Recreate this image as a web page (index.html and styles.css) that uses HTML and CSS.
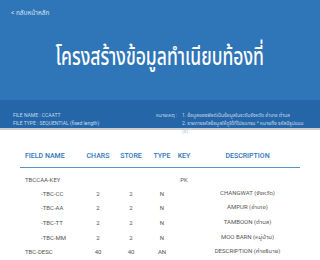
FILE: index.html
```html
<!DOCTYPE html>
<html lang="th">
<head>
<meta charset="utf-8">
<title>โครงสร้างข้อมูลทำเนียบท้องที่</title>
<link rel="stylesheet" href="styles.css">
</head>
<body>
<header class="hero">
  <a class="back" href="#">&lt; กลับหน้าหลัก</a>
  <div class="title-wrap"><h1 class="title">โครงสร้างข้อมูลทำเนียบท้องที่</h1></div>
</header>
<section class="info">
  <div class="file">
    <div>FILE NAME : CCAATT</div>
    <div>FILE TYPE : SEQUENTIAL (fixed length)</div>
  </div>
  <div class="note">
    <div class="note-label">หมายเหตุ :</div>
    <div class="note-items">
      <div>1. ข้อมูลของฟิลด์เป็นข้อมูลในระดับจังหวัด อำเภอ ตำบล</div>
      <div>2. รายการรหัสข้อมูลให้ดูได้ที่โปรแกรม * หมายถึง รหัสมีรูปแบบ</div>
      <div>(x)</div>
    </div>
  </div>
</section>
<main class="content">
  <table class="fields">
    <colgroup>
      <col class="c-name"><col class="c-chars"><col class="c-store"><col class="c-type"><col class="c-key"><col class="c-desc">
    </colgroup>
    <thead>
      <tr><th class="name">FIELD NAME</th><th>CHARS</th><th>STORE</th><th>TYPE</th><th>KEY</th><th>DESCRIPTION</th></tr>
    </thead>
    <tbody>
      <tr><td class="name">TBCCAA-KEY</td><td></td><td></td><td></td><td>PK</td><td></td></tr>
      <tr><td class="name sub">-TBC-CC</td><td>2</td><td>2</td><td>N</td><td></td><td>CHANGWAT (จังหวัด)</td></tr>
      <tr><td class="name sub">-TBC-AA</td><td>2</td><td>2</td><td>N</td><td></td><td>AMPUR (อำเภอ)</td></tr>
      <tr><td class="name sub">-TBC-TT</td><td>2</td><td>2</td><td>N</td><td></td><td>TAMBOON (ตำบล)</td></tr>
      <tr><td class="name sub">-TBC-MM</td><td>2</td><td>2</td><td>N</td><td></td><td>MOO BARN (หมู่บ้าน)</td></tr>
      <tr><td class="name">TBC-DESC</td><td>40</td><td>40</td><td>AN</td><td></td><td>DESCRIPTION (คำอธิบาย)</td></tr>
    </tbody>
  </table>
</main>
</body>
</html>
```
FILE: styles.css
```css
* { box-sizing: border-box; }
html, body { margin: 0; padding: 0; background: #ffffff; }
body {
  width: 320px;
  height: 260px;
  overflow: hidden;
  font-family: Roboto, "Noto Sans Thai", "Noto Sans Thai UI", "Noto Sans", sans-serif;
}
.hero {
  height: 100px;
  background: #2e76b7;
  display: flex;
  flex-direction: column;
  padding: 9px 0 0 11px;
}
.back {
  color: #d3e2f2;
  font-size: 6.5px;
  line-height: 9px;
  text-decoration: none;
}
.title-wrap {
  flex: 1;
  display: flex;
  align-items: center;
  justify-content: center;
  padding-right: 11px;
  padding-bottom: 4px;
}
.title {
  margin: 0;
  color: #ffffff;
  font-family: "Noto Sans Thai", "Noto Sans Thai UI", sans-serif;
  font-size: 25px;
  font-weight: 500;
  line-height: 32px;
  white-space: nowrap;
  transform: scaleX(0.7);
}
.info {
  height: 30px;
  background: #2466a7;
  border-bottom: 2px solid #cfcfcf;
  display: flex;
  padding: 11px 0 0 13px;
  font-size: 5px;
  line-height: 8px;
  color: #c4d8ee;
  white-space: nowrap;
}
.file { width: 143px; }
.note { display: flex; }
.note-label { width: 26px; }
.note-items div:last-child { color: #a9c4e2; }
.content { padding: 20px 20px 0 20px; }
.fields {
  width: 280px;
  border-collapse: collapse;
  table-layout: fixed;
}
.c-name { width: 65px; }
.c-chars { width: 26px; }
.c-store { width: 40px; }
.c-type { width: 22px; }
.c-key { width: 22px; }
.fields th {
  color: #2f74b5;
  font-size: 7px;
  font-weight: 500;
  text-align: center;
  height: 17px;
  padding: 0 0 5px 0;
  border-bottom: 1.5px solid #5e91c8;
  white-space: nowrap;
}
.fields td {
  color: #555555;
  font-size: 6px;
  text-align: center;
  height: 14.6px;
  padding: 0;
  white-space: nowrap;
}
.fields tbody tr:first-child td { padding-top: 5px; height: 19px; }
.fields .name { text-align: left; padding-left: 5px; }
.fields td.sub { padding-left: 21px; }
```
